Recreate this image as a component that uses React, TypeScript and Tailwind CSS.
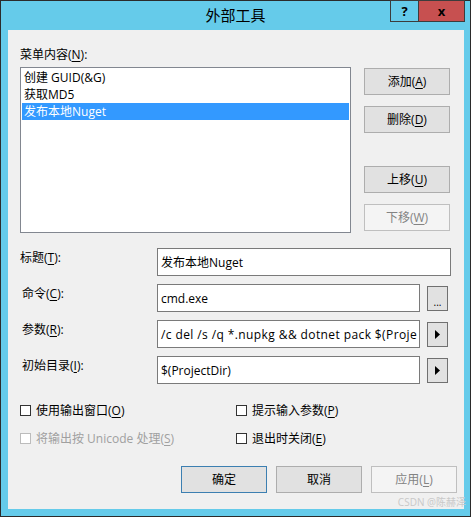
import React from "react";

const font = "font-['Open_Sans','Noto_Sans_CJK_SC',sans-serif]";

function Mn({ k }: { k: string }) {
  return (
    <>
      (<u className="underline-offset-[2px]">{k}</u>)
    </>
  );
}

function Btn({
  children,
  disabled,
  primary,
  className = "",
}: {
  children: React.ReactNode;
  disabled?: boolean;
  primary?: boolean;
  className?: string;
}) {
  const tone = disabled
    ? "border-[#bfbfbf] bg-[#f4f4f4] text-[#838383]"
    : primary
    ? "border-[#3c7fb1] bg-[#e1e1e1] text-black"
    : "border-[#adadad] bg-[#e1e1e1] text-black";
  return (
    <div
      className={`flex h-[27px] w-[86px] items-center justify-center border ${tone} ${className}`}
    >
      <span>{children}</span>
    </div>
  );
}

function Arrow() {
  return (
    <div className="mt-[2px] ml-[7px] flex h-[25px] w-[21px] items-center justify-center border border-[#707070] bg-[#e1e1e1]">
      <svg width="5" height="9" viewBox="0 0 5 9">
        <polygon points="0,0 5,4.5 0,9" fill="#000" />
      </svg>
    </div>
  );
}

function Field({
  value,
  wide,
  className = "",
}: {
  value: string;
  wide?: boolean;
  className?: string;
}) {
  return (
    <div
      className={`flex h-[28px] items-center overflow-hidden whitespace-nowrap border border-[#7a7a7a] bg-white pl-[3px] ${
        wide ? "w-[294px]" : "w-[263px]"
      } ${className}`}
    >
      {value}
    </div>
  );
}

function Check({ label, disabled }: { label: React.ReactNode; disabled?: boolean }) {
  return (
    <div className={`flex h-[17px] items-center ${disabled ? "text-[#a0a0a0]" : ""}`}>
      <div
        className={`h-[11px] w-[11px] border bg-white ${
          disabled ? "border-[#bcbcbc]" : "border-[#333333]"
        }`}
      />
      <span className="ml-[5px]">{label}</span>
    </div>
  );
}

export default function App() {
  const items = ["创建 GUID(&G)", "获取MD5", "发布本地Nuget"];
  return (
    <div
      className={`relative h-[517px] w-[471px] border border-[#2b2b2b] bg-[#65cbea] text-[12px] leading-[17px] text-black ${font}`}
    >
      <div className="flex h-[29px] items-center justify-center text-[15px]">外部工具</div>

      {/* caption buttons */}
      <div className="absolute -top-px right-[5px] flex">
        <div className="flex h-[22px] w-[29px] items-center justify-center border border-[#3c3c3c] text-[13px] font-bold">
          ?
        </div>
        <div className="-ml-px flex h-[22px] w-[47px] items-center justify-center border border-[#3c3c3c] bg-[#c75050] text-[13px] font-bold">
          x
        </div>
      </div>

      <div className="ml-[7px] h-[479px] w-[456px] bg-[#f0f0f0] pt-[16px] pr-[7px] pl-[12px]">
        <div>
          菜单内容<Mn k="N" />:
        </div>

        <div className="mt-[4px] flex">
          <div className="h-[166px] w-[331px] border border-[#828790] bg-white p-px">
            {items.map((t, i) => (
              <div
                key={t}
                className={`h-[17px] pl-[2px] ${i === 2 ? "bg-[#3399ff] text-white" : ""}`}
              >
                {t}
              </div>
            ))}
          </div>
          <div className="ml-[13px] flex flex-col pt-px">
            <Btn>
              添加<Mn k="A" />
            </Btn>
            <Btn className="mt-[11px]">
              删除<Mn k="D" />
            </Btn>
            <Btn className="mt-[33px]">
              上移<Mn k="U" />
            </Btn>
            <Btn className="mt-[11px]" disabled>
              下移<Mn k="W" />
            </Btn>
          </div>
        </div>

        <div className="mt-[15px] flex flex-col gap-[8px]">
          <div className="flex">
            <div className="w-[137px] pt-[1px]">
              标题<Mn k="T" />:
            </div>
            <Field value="发布本地Nuget" wide />
          </div>
          <div className="flex">
            <div className="w-[137px] pt-[1px] pl-[2px]">
              命令<Mn k="C" />:
            </div>
            <Field value="cmd.exe" />
            <div className="mt-[2px] ml-[7px] flex h-[25px] w-[21px] items-end justify-center border border-[#707070] bg-[#e1e1e1] pb-[3px] text-[10px] leading-[10px]">
              ...
            </div>
          </div>
          <div className="flex">
            <div className="w-[137px] pt-[1px] pl-[2px]">
              参数<Mn k="R" />:
            </div>
            <Field
              value="/c del /s /q *.nupkg && dotnet pack $(Proje"
              className="tracking-[0.4px]"
            />
            <Arrow />
          </div>
          <div className="flex">
            <div className="w-[137px] pt-[1px] pl-[2px]">
              初始目录<Mn k="I" />:
            </div>
            <Field value="$(ProjectDir)" />
            <Arrow />
          </div>
        </div>

        <div className="mt-[18px] grid grid-cols-[216px_1fr] gap-y-[11px]">
          <Check label={<>使用输出窗口<Mn k="O" /></>} />
          <Check label={<>提示输入参数<Mn k="P" /></>} />
          <Check disabled label={<>将输出按 Unicode 处理<Mn k="S" /></>} />
          <Check label={<>退出时关闭<Mn k="E" /></>} />
        </div>

        <div className="mt-[19px] flex justify-end gap-[9px]">
          <Btn primary>确定</Btn>
          <Btn>取消</Btn>
          <Btn disabled>
            应用<Mn k="L" />
          </Btn>
        </div>
      </div>

      <div className="absolute right-[4px] bottom-[8px] text-[10px] leading-[12px] text-[#c8c8c8]">
        CSDN @陈赫泽
      </div>
    </div>
  );
}
